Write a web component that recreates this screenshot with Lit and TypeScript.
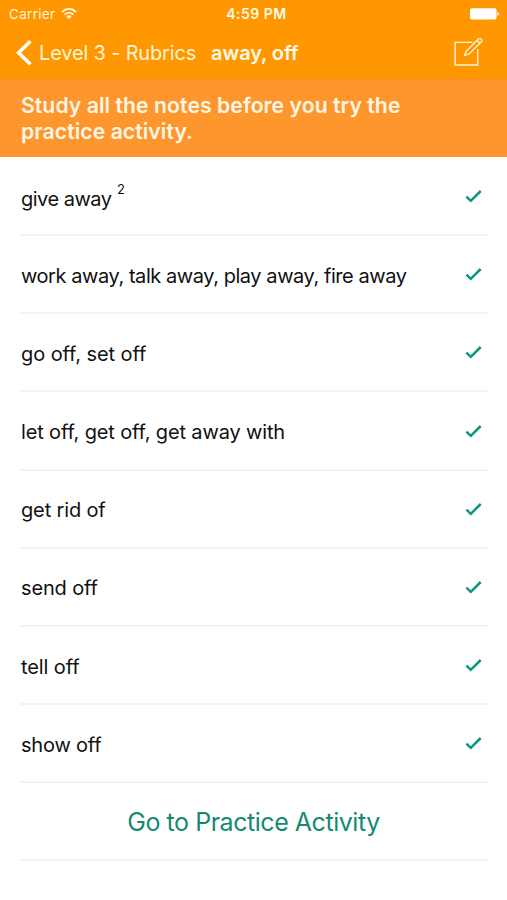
import { LitElement, html, css, nothing } from "lit";
import { customElement } from "lit/decorators.js";
import { styleMap } from "lit/directives/style-map.js";

interface Note {
  title: string;
  tracking: number;
  count?: string;
}

const NOTES: Note[] = [
  { title: "give away", tracking: -0.5, count: "2" },
  { title: "work away, talk away, play away, fire away", tracking: -0.44 },
  { title: "go off, set off", tracking: -0.08 },
  { title: "let off, get off, get away with", tracking: -0.14 },
  { title: "get rid of", tracking: -0.15 },
  { title: "send off", tracking: -0.14 },
  { title: "tell off", tracking: -0.1 },
  { title: "show off", tracking: -0.2 },
];

@customElement("status-bar")
class StatusBar extends LitElement {
  static styles = css`
    :host {
      display: grid;
      grid-template-columns: 1fr auto 1fr;
      align-items: center;
      height: 27px;
      padding: 0 8px 0 9px;
      font-size: 13.5px;
      color: #fff3d6;
    }
    .left { display: flex; align-items: center; gap: 6px; }
    .carrier { letter-spacing: 0.3px; }
    .time { font-size: 14px; font-weight: 600; letter-spacing: 0.5px; color: #fff8e6; padding-left: 5px; }
    .battery { justify-self: end; }
    svg { display: block; }
  `;
  render() {
    return html`
      <div class="left">
        <span class="carrier">Carrier</span>
        <svg width="16" height="12" viewBox="0 0 16 12" fill="none" stroke="#fff8e6" stroke-width="1.7">
          <path d="M1 4.1C5 -.1 11 -.1 15 4.1" />
          <path d="M3.5 6.7C6 4.1 10 4.1 12.5 6.7" />
          <path d="M8 11 5.3 8.3Q8 6.2 10.7 8.3Z" fill="#fff8e6" stroke="none" />
        </svg>
      </div>
      <span class="time">4:59 PM</span>
      <svg class="battery" width="29" height="12" viewBox="0 0 29 12" fill="#fff">
        <rect x="0" y="0.3" width="26.6" height="11.2" rx="2" />
        <path d="M27.4 4q1.6.4 1.6 2t-1.6 2z" />
      </svg>
    `;
  }
}

@customElement("nav-bar")
class NavBar extends LitElement {
  static styles = css`
    :host {
      display: flex;
      align-items: center;
      height: 51px;
      padding: 0 24px 0 16px;
      box-sizing: border-box;
      color: #fff3d6;
      font-size: 20px;
      white-space: nowrap;
    }
    .chevron { margin-right: 7px; }
    .back { letter-spacing: -0.17px; }
    .title { margin-left: 15px; font-weight: 600; letter-spacing: -0.1px; color: #fff8e6; }
    .compose { margin-left: auto; }
    svg { display: block; }
  `;
  render() {
    return html`
      <svg class="chevron" width="16" height="26" viewBox="0 0 16 26" fill="none" stroke="#fff" stroke-width="3.4">
        <path d="M14.4 1.3 2.6 12.7 14.4 24.2" />
      </svg>
      <span class="back">Level 3 - Rubrics</span>
      <span class="title">away, off</span>
      <svg class="compose" width="29" height="30" viewBox="0 0 29 30" fill="none" stroke="#fff3d6" stroke-width="1.4">
        <path d="M18.6 4.4H1.2V27H23.7V11" />
        <path d="M10.8 17.2 12.1 13.3 24.6 .8Q25.9 -.1 27.1 1T27.6 3.5L15 16Z" />
        <path d="M23.2 2.4 25.9 5.1" />
      </svg>
    `;
  }
}

@customElement("note-row")
class NoteRow extends LitElement {
  static properties = { note: { attribute: false } };
  declare note: Note;
  static styles = css`
    :host {
      display: flex;
      align-items: center;
      justify-content: space-between;
      height: 78.17px;
      box-sizing: border-box;
      border-bottom: 2px solid #f3f3f3;
      padding: 0 7.5px 0 1px;
      color: #111;
      font-size: 20px;
      white-space: nowrap;
    }
    .label { padding-top: 3px; }
    .label.counted { padding-top: 6px; }
    .count { font-size: 13px; margin-left: 5.5px; position: relative; top: -12px; line-height: 0; }
    svg { display: block; }
  `;
  render() {
    const { title, count, tracking } = this.note;
    return html`
      <span class=${count ? "label counted" : "label"} style=${styleMap({ letterSpacing: `${tracking}px` })}
        >${title}${count ? html`<span class="count">${count}</span>` : nothing}</span
      >
      <svg width="17" height="14" viewBox="0 0 17 14" fill="none" stroke="#0b9680" stroke-width="2.5">
        <path d="M1.4 7.6 5.8 11.8 15.7 2" />
      </svg>
    `;
  }
}

@customElement("app-root")
class AppRoot extends LitElement {
  static styles = css`
    :host {
      display: block;
      height: 900px;
      overflow: hidden;
      background: #fff;
      font-family: Inter, "Liberation Sans", sans-serif;
    }
    .header { background: #ff9800; border-bottom: 1px solid #f79210; }
    .banner {
      box-sizing: border-box;
      height: 78px;
      padding: 13px 21px 0;
      background: #fd972d;
      color: #fff5e4;
      font-size: 21.2px;
      font-weight: 600;
      line-height: 26px;
      letter-spacing: 0.05px;
    }
    .list { padding: 1px 18px 0 20px; }
    .practice {
      display: flex;
      align-items: center;
      justify-content: center;
      height: 78.17px;
      box-sizing: border-box;
      border-bottom: 2px solid #f3f3f3;
      padding: 2px 2px 0 0;
      color: #168a70;
      font-size: 25px;
      letter-spacing: -0.46px;
      white-space: nowrap;
    }
  `;
  render() {
    return html`
      <div class="header">
        <status-bar></status-bar>
        <nav-bar></nav-bar>
      </div>
      <div class="banner">Study all the notes before you try the<br />practice activity.</div>
      <div class="list">
        ${NOTES.map((note) => html`<note-row .note=${note}></note-row>`)}
        <div class="practice"><span>Go to Practice Activity</span></div>
      </div>
    `;
  }
}
